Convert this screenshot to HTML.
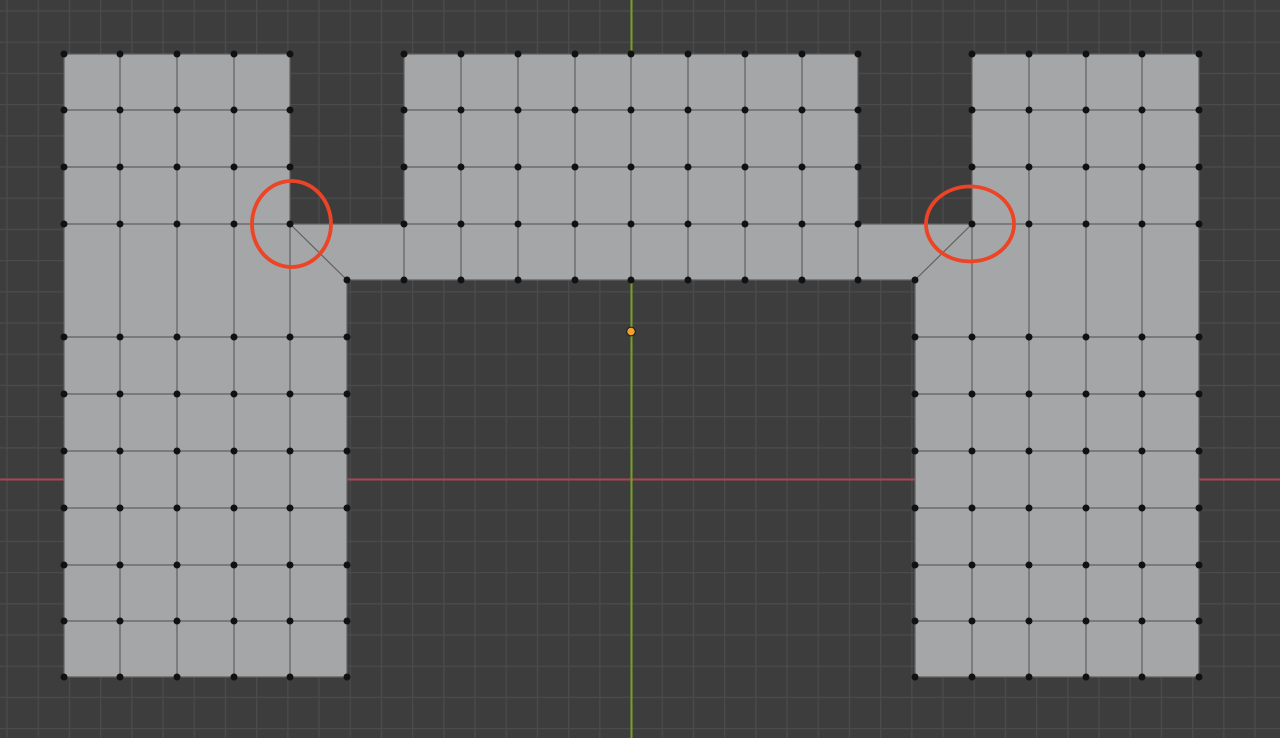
<!DOCTYPE html>
<html><head><meta charset="utf-8"><style>html,body{margin:0;padding:0;background:#3d3d3d;overflow:hidden}svg{display:block}</style></head>
<body>
<svg width="1280" height="738" viewBox="0 0 1280 738" xmlns="http://www.w3.org/2000/svg">
<defs>
<pattern id="g" width="31.2" height="31.2" patternUnits="userSpaceOnUse" x="6.4" y="10.4">
<rect width="31.2" height="31.2" fill="#3d3d3d"/>
<path d="M0.6 0V31.2M0 0.6H31.2" stroke="#4b4b4b" stroke-width="1.3"/>
</pattern>
</defs>
<rect width="1280" height="738" fill="url(#g)"/>
<line x1="0" y1="479.5" x2="1280" y2="479.5" stroke="#b04352" stroke-width="2"/>
<line x1="631.5" y1="0" x2="631.5" y2="738" stroke="#78a028" stroke-width="2"/>
<path d="M64 54H290V224H404V54H858V224H972V54H1199V677H915V280H347V677H64Z" fill="#a5a6a8"/>
<g stroke="#606060" stroke-width="1.2" fill="none">
<path d="M64 54H290M64 110H290M64 167H290M64 224H290M120 54V677M177 54V677M234 54V677M290 54V677M64 54V677"/>
<path d="M64 337H347M64 394H347M64 451H347M64 508H347M64 565H347M64 621H347M64 677H347M347 280V677"/>
<path d="M404 54H858M404 110H858M404 167H858M290 224H972M347 280H915"/>
<path d="M404 54V280M461 54V280M518 54V280M575 54V280M631 54V280M688 54V280M745 54V280M802 54V280M858 54V280"/>
<path d="M290 224L347 280M972 224L915 280"/>
<path d="M972 54H1199M972 110H1199M972 167H1199M972 224H1199M972 54V677M1029 54V677M1086 54V677M1142 54V677M1199 54V677"/>
<path d="M915 337H1199M915 394H1199M915 451H1199M915 508H1199M915 565H1199M915 621H1199M915 677H1199M915 280V677"/>
</g>
<path stroke="#111" stroke-width="7" stroke-linecap="round" fill="none" d="
M64 54h0M120 54h0M177 54h0M234 54h0M290 54h0
M64 110h0M120 110h0M177 110h0M234 110h0M290 110h0
M64 167h0M120 167h0M177 167h0M234 167h0M290 167h0
M64 224h0M120 224h0M177 224h0M234 224h0M290 224h0
M64 337h0M120 337h0M177 337h0M234 337h0M290 337h0M347 337h0
M64 394h0M120 394h0M177 394h0M234 394h0M290 394h0M347 394h0
M64 451h0M120 451h0M177 451h0M234 451h0M290 451h0M347 451h0
M64 508h0M120 508h0M177 508h0M234 508h0M290 508h0M347 508h0
M64 565h0M120 565h0M177 565h0M234 565h0M290 565h0M347 565h0
M64 621h0M120 621h0M177 621h0M234 621h0M290 621h0M347 621h0
M64 677h0M120 677h0M177 677h0M234 677h0M290 677h0M347 677h0
M404 54h0M461 54h0M518 54h0M575 54h0M631 54h0M688 54h0M745 54h0M802 54h0M858 54h0
M404 110h0M461 110h0M518 110h0M575 110h0M631 110h0M688 110h0M745 110h0M802 110h0M858 110h0
M404 167h0M461 167h0M518 167h0M575 167h0M631 167h0M688 167h0M745 167h0M802 167h0M858 167h0
M404 224h0M461 224h0M518 224h0M575 224h0M631 224h0M688 224h0M745 224h0M802 224h0M858 224h0
M347 280h0M404 280h0M461 280h0M518 280h0M575 280h0M631 280h0M688 280h0M745 280h0M802 280h0M858 280h0M915 280h0
M972 54h0M1029 54h0M1086 54h0M1142 54h0M1199 54h0
M972 110h0M1029 110h0M1086 110h0M1142 110h0M1199 110h0
M972 167h0M1029 167h0M1086 167h0M1142 167h0M1199 167h0
M972 224h0M1029 224h0M1086 224h0M1142 224h0M1199 224h0
M915 337h0M972 337h0M1029 337h0M1086 337h0M1142 337h0M1199 337h0
M915 394h0M972 394h0M1029 394h0M1086 394h0M1142 394h0M1199 394h0
M915 451h0M972 451h0M1029 451h0M1086 451h0M1142 451h0M1199 451h0
M915 508h0M972 508h0M1029 508h0M1086 508h0M1142 508h0M1199 508h0
M915 565h0M972 565h0M1029 565h0M1086 565h0M1142 565h0M1199 565h0
M915 621h0M972 621h0M1029 621h0M1086 621h0M1142 621h0M1199 621h0
M915 677h0M972 677h0M1029 677h0M1086 677h0M1142 677h0M1199 677h0"/>
<circle cx="631" cy="331.5" r="4.3" fill="#f5a02a" stroke="#222" stroke-width="1.2"/>
<ellipse cx="291.5" cy="224" rx="39.5" ry="43" fill="none" stroke="#ec4424" stroke-width="3.8"/>
<ellipse cx="970" cy="224" rx="44" ry="37.5" fill="none" stroke="#ec4424" stroke-width="3.8"/>
</svg>
</body></html>
